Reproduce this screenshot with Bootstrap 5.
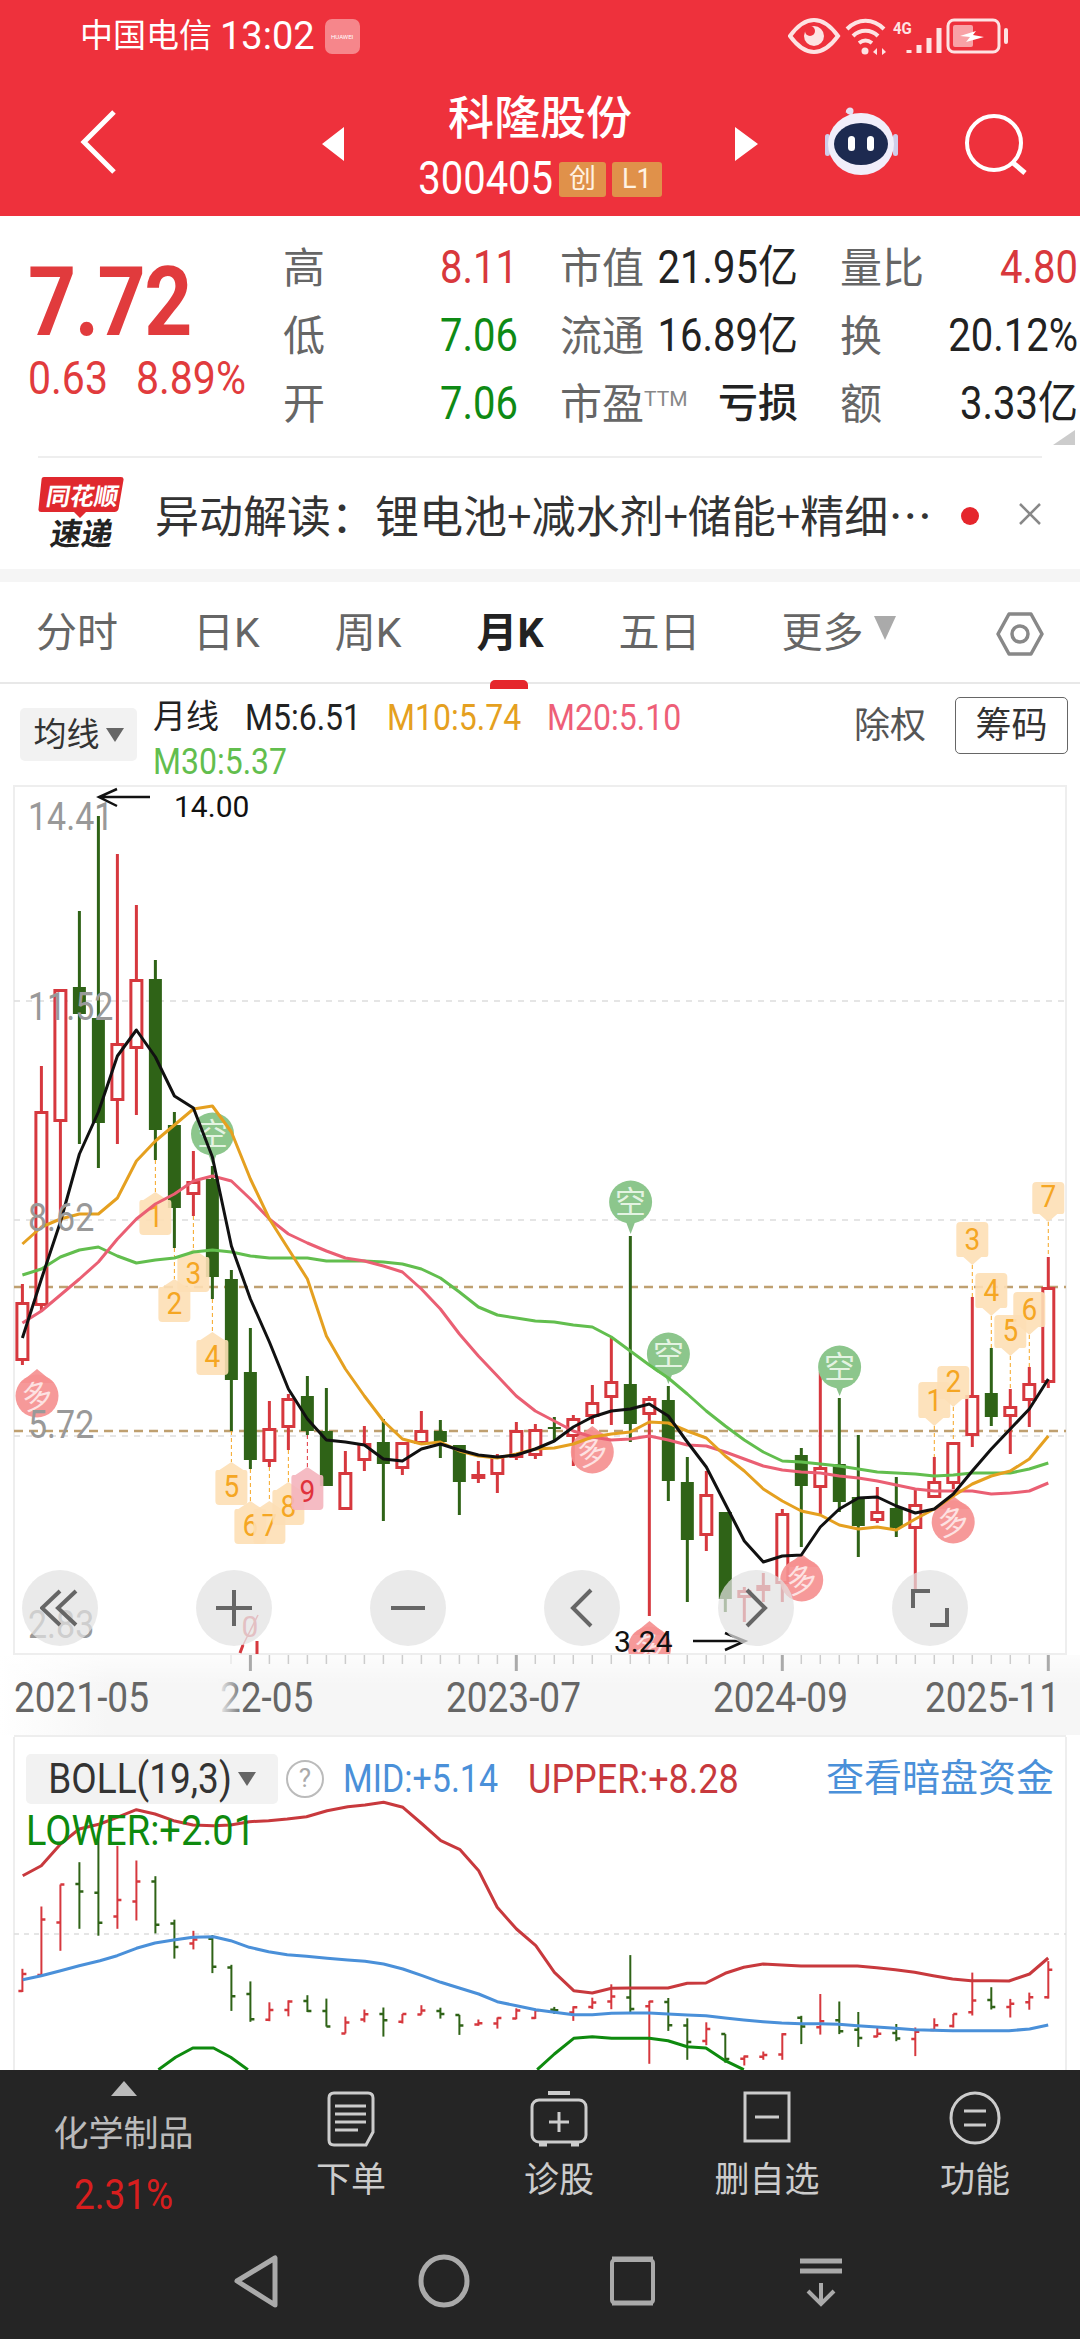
<!DOCTYPE html>
<html lang="zh">
<head>
    <meta charset="UTF-8">
    <meta name="viewport" content="width=device-width, initial-scale=1.0">
    <title>科隆股份 300405</title>
    <link href="https://cdn.jsdelivr.net/npm/bootstrap@5.3.0/dist/css/bootstrap.min.css" rel="stylesheet">
    <style>
        body { width: 1080px; height: 2340px; overflow: hidden; background: #fff; font-family: Roboto, "Noto Sans CJK SC", sans-serif; color: #222; }
        svg { display: block; }
        /* the app's digit face is taller and narrower than Roboto */
        .tall-num { display: inline-block; transform: scaleY(1.14); }
        .tall-svg { transform-box: fill-box; transform-origin: center; transform: scaleY(1.14); }
        .stock-head { height: 216px; background: #ee313c; color: #fff; }
        .status-bar { height: 72px; padding: 0 0 0 80px; font-size: 33px; }
        .status-time { font-size: 38px; margin-left: 8px; }
        .hw-badge { width: 35px; height: 35px; margin-left: 10px; border-radius: 7px; background: #f6868b; color: #fff; font-size: 6px; }
        .status-icons { margin-left: auto; padding-right: 70px; }
        .title-row { height: 144px; position: relative; }
        .stock-name { font-size: 46px; line-height: 56px; font-weight: 500; margin-top: 18px; }
        .stock-code { font-size: 40px; line-height: 46px; margin-top: 10px; }
        .code-tag { height: 35px; background: #e0914a; color: #fff2e2; font-size: 27px; line-height: 35px; border-radius: 3px; padding: 0 10px; margin-left: 6px; }
        .code-tag:first-of-type { margin-left: 14px; }
        .head-btn { position: absolute; left: 0; top: 0; }
        .quote-box { height: 240px; padding: 18px 0 0 28px; position: relative; }
        .price-big { font-size: 84px; line-height: 86px; font-weight: 700; color: #e13b3d; margin-top: 26px; letter-spacing: -1.5px; }
        .price-change { font-size: 41px; line-height: 48px; color: #e13b3d; margin-top: 8px; gap: 28px; }
        .quote-grid { position: absolute; left: 283px; top: 18px; display: grid; grid-template-columns: 235px 238px 238px; column-gap: 42px; grid-auto-rows: 68px; }
        .quote-cell { font-size: 40px; }
        .q-label { font-size: 42px; color: #666; }
        .q-bold { font-weight: 500; }
        .q-red { color: #d8383c; }
        .q-green { color: #0e8a14; }
        .ttm { font-size: 21px; color: #888; vertical-align: 13px; }
        .corner-mark { position: absolute; right: 5px; bottom: 11px; width: 0; height: 0; border-left: 22px solid transparent; border-bottom: 15px solid #ccc; }
        .news-row { height: 113px; margin: 0 38px; border-top: 2px solid #eee; font-size: 44px; color: #333; position: relative; }
        .news-text { margin-left: 27px; white-space: nowrap; font-family: "Noto Sans CJK SC", sans-serif; }
        .news-dot { position: absolute; left: 923px; top: 49px; width: 18px; height: 18px; background: #e5262c; border-radius: 50%; }
        .gray-strip { height: 13px; background: #f5f5f5; }
        .tab-bar { height: 102px; padding: 4px 36px 0; border-bottom: 2px solid #e8e8e8; position: relative; gap: 75px; font-size: 41px; color: #666; }
        .tab-on { color: #222; font-weight: 700; position: relative; }
        .tab-on::after { content: ""; position: absolute; left: 14px; bottom: -24px; width: 38px; height: 9px; background: #e5262c; border-radius: 5px 5px 0 0; }
        .tab-more { width: 116px; white-space: nowrap; margin-left: 6px; }
        .tri-down { display: inline-block; width: 0; height: 0; border-left: 11px solid transparent; border-right: 11px solid transparent; border-top: 24px solid #aaa; margin-left: 10px; vertical-align: 7px; }
        .ma-bar { height: 101px; position: relative; font-size: 32px; }
        .ma-pill { position: absolute; left: 20px; top: 24px; width: 117px; height: 53px; background: #f2f2f2; border-radius: 5px; font-size: 33px; color: #333; }
        .tri-small { width: 0; height: 0; border-left: 9px solid transparent; border-right: 9px solid transparent; border-top: 14px solid #666; margin-left: 6px; }
        .ma-vals { position: absolute; left: 153px; top: 11px; width: 560px; line-height: 44px; }
        .ma-vals span { margin-right: 26px; }
        .ma-title { font-size: 33px; }
        .c-m10 { color: #e5a020; }
        .c-m20 { color: #ee5f78; }
        .c-m30 { color: #62be4e; }
        .ma-right { position: absolute; right: 12px; top: 13px; }
        .ma-fq { font-size: 36px; color: #555; margin-right: 29px; }
        .chip-btn { width: 113px; height: 57px; border: 1px solid #666; border-radius: 5px; font-size: 36px; color: #333; }
        .chart-wrap { position: relative; height: 952px; }
        .ctrl-row { position: absolute; left: 22px; top: 785px; gap: 98px; }
        .ctrl-btn { width: 76px; height: 76px; background: rgba(226,226,226,.72); }
        .boll-wrap { position: relative; height: 333px; overflow: hidden; }
        .boll-head { position: absolute; left: 26px; top: 13px; right: 26px; font-size: 36px; }
        .boll-pill { width: 252px; height: 50px; background: #f2f2f2; border-radius: 5px; color: #333; font-size: 37px; }
        .boll-help { width: 38px; height: 38px; border: 2px solid #bbb; border-radius: 50%; color: #aaa; font-size: 26px; margin: 0 19px 0 8px; }
        .c-mid { color: #4a90d9; font-size: 34px; }
        .c-upper { color: #c8393d; margin-left: 30px; }
        .boll-link { color: #4a90d9; font-size: 38px; margin-left: auto; }
        .c-lower { position: absolute; left: 0; top: 60px; color: #0e8a0e; line-height: 40px; font-size: 38px; }
        .foot-bar { height: 269px; background: #252525; color: #ccc; }
        .foot-menu { height: 164px; }
        .foot-sector { width: 247px; padding-top: 11px; font-size: 35px; color: #bbb; line-height: 42px; }
        .sector-up { width: 0; height: 0; border-left: 13px solid transparent; border-right: 13px solid transparent; border-bottom: 15px solid #bbb; margin-bottom: 18px; }
        .sector-pct { color: #d81e1e; font-size: 37px; margin-top: 18px; }
        .foot-item { width: 208px; font-size: 35px; line-height: 42px; padding-top: 21px; }
        .foot-icon { height: 67px; margin-bottom: 2px; }
        .nav-keys { height: 105px; position: relative; }
        .nav-keys svg { position: absolute; left: 0; top: 0; }
        .chart-txt { font-family: Roboto, sans-serif; }
        .cjk-txt { font-family: "Noto Sans CJK SC", sans-serif; }
    </style>
</head>
<body>
    <div class="stock-head">
        <div class="status-bar d-flex align-items-center">
            <span>中国电信</span><span class="status-time">13:02</span>
            <span class="hw-badge d-flex align-items-center justify-content-center">HUAWEI</span>
            <span class="status-icons">
                <svg width="222" height="40" viewBox="0 0 222 40" fill="none" stroke="#fde3e3">
                    <path d="M2 20C10 9 19 4 26 4s16 5 24 16c-8 11-17 16-24 16S10 31 2 20z" stroke-width="4"/>
                    <circle cx="26" cy="20" r="10" fill="#fde3e3" stroke="none"/>
                    <circle cx="22" cy="15" r="5" fill="#ee313c" stroke="none"/>
                    <path d="M59 13c11-11 26-11 37 0M65 20c7-7 18-7 25 0M71 27c4-3 9-3 13 0" stroke-width="4"/>
                    <circle cx="77" cy="35" r="3.5" fill="#fde3e3" stroke="none"/>
                    <path d="M89 32l-4 4 4 3zM94 32l4 4-4 3z" fill="#fde3e3" stroke="none"/>
                    <text x="105" y="17" class="chart-txt tall-svg" font-size="15" font-weight="700" fill="#fde3e3" stroke="none">4G</text>
                    <path d="M121 34v3M131 29v8M141 22v15M151 12v25" stroke-width="5"/>
                    <rect x="160" y="4" width="51" height="32" rx="6" stroke-width="3"/>
                    <rect x="165" y="9" width="20" height="22" rx="2" fill="#f8a2a6" stroke="none"/>
                    <path d="M172 20l16-5-3 4 11 2-18 5 4-5z" fill="#fff" stroke="none"/>
                    <rect x="216" y="12" width="4" height="16" rx="2" fill="#fde3e3" stroke="none"/>
                </svg>
            </span>
        </div>
        <div class="title-row d-flex flex-column align-items-center">
            <div class="stock-name">科隆股份</div>
            <div class="stock-code d-flex align-items-center"><span class="tall-num">300405</span><span class="code-tag">创</span><span class="code-tag">L1</span></div>
            <svg class="head-btn" width="1080" height="144" viewBox="0 72 1080 144">
                <path d="M114 112L84 142l30 30" fill="none" stroke="#fff" stroke-width="5"/>
                <path d="M344 127v34l-22-17zM735 127v34l23-17z" fill="#fff"/>
                <path d="M852 120c0-6-1-8-6-9" fill="none" stroke="#e6e0f2" stroke-width="3"/>
                <circle cx="850" cy="111" r="3.5" fill="#e6e0f2"/>
                <rect x="825" y="134" width="5" height="22" rx="2.5" fill="#cfcdea"/>
                <rect x="893" y="134" width="5" height="22" rx="2.5" fill="#cfcdea"/>
                <ellipse cx="861" cy="144" rx="33" ry="31" fill="#f1eefa"/>
                <ellipse cx="861" cy="144" rx="27" ry="21" fill="#1d2a50"/>
                <rect x="848" y="136" width="7" height="15" rx="3.5" fill="#fff"/>
                <rect x="867" y="136" width="7" height="15" rx="3.5" fill="#fff"/>
                <circle cx="994" cy="143" r="27" fill="none" stroke="#fff" stroke-width="4"/>
                <path d="M1012 162l13 11" stroke="#fff" stroke-width="5"/>
            </svg>
        </div>
    </div>

    <div class="quote-box">
        <div class="price-big"><span class="tall-num">7.72</span></div>
        <div class="price-change d-flex"><span class="tall-num">0.63</span><span class="tall-num">8.89%</span></div>
        <div class="quote-grid">
            <div class="quote-cell d-flex justify-content-between align-items-center"><span class="q-label">高</span><span class="q-red tall-num">8.11</span></div>
            <div class="quote-cell d-flex justify-content-between align-items-center"><span class="q-label">市值</span><span class="tall-num">21.95亿</span></div>
            <div class="quote-cell d-flex justify-content-between align-items-center"><span class="q-label">量比</span><span class="q-red tall-num">4.80</span></div>
            <div class="quote-cell d-flex justify-content-between align-items-center"><span class="q-label">低</span><span class="q-green tall-num">7.06</span></div>
            <div class="quote-cell d-flex justify-content-between align-items-center"><span class="q-label">流通</span><span class="tall-num">16.89亿</span></div>
            <div class="quote-cell d-flex justify-content-between align-items-center"><span class="q-label">换</span><span class="tall-num">20.12%</span></div>
            <div class="quote-cell d-flex justify-content-between align-items-center"><span class="q-label">开</span><span class="q-green tall-num">7.06</span></div>
            <div class="quote-cell d-flex justify-content-between align-items-center"><span class="q-label">市盈<span class="ttm">TTM</span></span><span class="q-bold">亏损</span></div>
            <div class="quote-cell d-flex justify-content-between align-items-center"><span class="q-label">额</span><span class="tall-num">3.33亿</span></div>
        </div>
        <div class="corner-mark"></div>
    </div>
    <div class="news-row d-flex align-items-center">
        <svg width="90" height="80" viewBox="42 474 90 80">
            <path d="M48 477h77q3 0 2.500 3l-5 29q-1 3-4 3H90l-6 6-6-6H45q-3 0-2.500-3l3-29q0-3 2.500-3z" fill="#e0282e"/>
            <g transform="translate(85 505) skewX(-10)"><text text-anchor="middle" class="cjk-txt" font-size="24" font-weight="700" fill="#fff">同花顺</text></g>
            <g transform="translate(84 545) skewX(-10)"><text text-anchor="middle" class="cjk-txt" font-size="31" font-weight="700" fill="#222">速递</text></g>
        </svg>
        <div class="news-text">异动解读：锂电池+减水剂+储能+精细…</div>
        <div class="news-dot"></div>
        <svg class="ms-auto" width="24" height="24" viewBox="0 0 24 24" stroke="#888" stroke-width="2.500"><path d="M2 2l20 20M22 2L2 22"/></svg>
    </div>
    <div class="gray-strip"></div>

    <div class="tab-bar d-flex align-items-center">
        <span>分时</span><span>日K</span><span>周K</span><span class="tab-on">月K</span><span>五日</span>
        <span class="tab-more">更多<i class="tri-down"></i></span>
        <svg class="ms-auto" width="48" height="46" viewBox="0 0 48 46" fill="none" stroke="#888" stroke-width="3.500"><path d="M13 3h22l11 20-11 20H13L2 23z" stroke-linejoin="round"/><circle cx="24" cy="23" r="8"/></svg>
    </div>

    <div class="ma-bar">
        <div class="ma-pill d-flex align-items-center justify-content-center">均线<i class="tri-small"></i></div>
        <div class="ma-vals d-flex flex-wrap align-items-center">
            <span class="ma-title">月线</span><span class="tall-num">M5:6.51</span><span class="c-m10 tall-num">M10:5.74</span><span class="c-m20 tall-num">M20:5.10</span><span class="c-m30 tall-num">M30:5.37</span>
        </div>
        <div class="ma-right d-flex align-items-center">
            <span class="ma-fq">除权</span>
            <span class="chip-btn d-flex align-items-center justify-content-center">筹码</span>
        </div>
    </div>

    <div class="chart-wrap">
        <div id="kChart"></div>
        <div class="ctrl-row d-flex">
            <div class="ctrl-btn rounded-circle d-flex align-items-center justify-content-center"><svg width="40" height="40" viewBox="0 0 40 40" fill="none" stroke="#666" stroke-width="4"><path d="M20 3L2 20l18 17M36 3L18 20l18 17"/></svg></div>
            <div class="ctrl-btn rounded-circle d-flex align-items-center justify-content-center"><svg width="38" height="38" viewBox="0 0 38 38" fill="none" stroke="#666" stroke-width="4"><path d="M1 19h36M19 1v36"/></svg></div>
            <div class="ctrl-btn rounded-circle d-flex align-items-center justify-content-center"><svg width="38" height="38" viewBox="0 0 38 38" fill="none" stroke="#666" stroke-width="4"><path d="M2 19h34"/></svg></div>
            <div class="ctrl-btn rounded-circle d-flex align-items-center justify-content-center"><svg width="24" height="40" viewBox="0 0 24 40" fill="none" stroke="#666" stroke-width="4"><path d="M21 2L3 20l18 18"/></svg></div>
            <div class="ctrl-btn rounded-circle d-flex align-items-center justify-content-center"><svg width="24" height="40" viewBox="0 0 24 40" fill="none" stroke="#666" stroke-width="4"><path d="M3 2l18 18L3 38"/></svg></div>
            <div class="ctrl-btn rounded-circle d-flex align-items-center justify-content-center"><svg width="40" height="40" viewBox="0 0 40 40" fill="none" stroke="#666" stroke-width="4"><path d="M20 3H3v17M20 37h17V20"/></svg></div>
        </div>
    </div>

    <div class="boll-wrap">
        <div id="bollChart"></div>
        <div class="boll-head d-flex align-items-center">
            <span class="boll-pill d-flex align-items-center justify-content-center"><span class="tall-num">BOLL(19,3)</span><i class="tri-small"></i></span>
            <span class="boll-help d-flex align-items-center justify-content-center">?</span>
            <span class="c-mid tall-num">MID:+5.14</span>
            <span class="c-upper tall-num">UPPER:+8.28</span>
            <span class="boll-link">查看暗盘资金</span>
            <span class="c-lower tall-num">LOWER:+2.01</span>
        </div>
    </div>

    <div class="foot-bar">
        <div class="foot-menu d-flex">
            <div class="foot-sector d-flex flex-column align-items-center">
                <div class="sector-up"></div>
                <div>化学制品</div>
                <div class="sector-pct tall-num">2.31%</div>
            </div>
            <div class="foot-item d-flex flex-column align-items-center">
                <div class="foot-icon"><svg width="48" height="56" viewBox="0 0 48 56" fill="none" stroke="#ccc" stroke-width="3"><path d="M7 2h34q5 0 5 5v34l-7 13H7q-5 0-5-5V7q0-5 5-5z"/><path d="M8 15h31M8 23h31M8 31h31M8 39h23"/></svg></div>
                <div>下单</div>
            </div>
            <div class="foot-item d-flex flex-column align-items-center">
                <div class="foot-icon"><svg width="58" height="56" viewBox="0 0 58 56" fill="none" stroke="#ccc" stroke-width="3"><path d="M18 2h22" stroke-width="4"/><rect x="2" y="9" width="54" height="42" rx="7"/><path d="M29 21v20M19 31h20"/><path d="M9 53h8M41 53h8" stroke-width="5"/></svg></div>
                <div>诊股</div>
            </div>
            <div class="foot-item d-flex flex-column align-items-center">
                <div class="foot-icon"><svg width="48" height="52" viewBox="0 0 48 52" fill="none" stroke="#ccc" stroke-width="3"><rect x="2" y="2" width="44" height="48"/><path d="M12 26h24"/></svg></div>
                <div>删自选</div>
            </div>
            <div class="foot-item d-flex flex-column align-items-center">
                <div class="foot-icon"><svg width="52" height="54" viewBox="0 0 52 54" fill="none" stroke="#ccc" stroke-width="3"><ellipse cx="26" cy="27" rx="24" ry="25"/><path d="M15 20h22M15 34h22"/></svg></div>
                <div>功能</div>
            </div>
        </div>
        <div class="nav-keys">
            <svg width="1080" height="105" viewBox="0 2235 1080 105" fill="none" stroke="#aaa">
                <path d="M275 2259v47l-38-24z" stroke-width="5" stroke-linejoin="round"/>
                <ellipse cx="444" cy="2282" rx="23" ry="24" stroke-width="5"/>
                <rect x="612" y="2261" width="41" height="43" rx="3" stroke-width="4"/>
                <path d="M612 2260h41M612 2304h41" stroke-width="5"/>
                <path d="M800 2262h42M800 2272h42" stroke-width="5"/>
                <path d="M821 2284v20M808 2292l13 13 13-13" stroke-width="4"/>
            </svg>
        </div>
    </div>

    <script>
        // [hi, bodyTop, bodyBottom, lo, up] in page pixels, one per month
        const candles = [
            [1285,1303,1362,1366,1],[1067,1112,1307,1312,1],[990,990,1123,1222,1],[912,988,1015,1145,0],[817,1019,1124,1169,0],
            [855,1044,1102,1145,1],[906,980,1050,1116,1],[961,980,1131,1161,0],[1113,1126,1209,1249,0],[1152,1182,1196,1217,1],
            [1167,1180,1278,1300,0],[1271,1280,1381,1432,0],[1329,1373,1461,1470,0],[1402,1429,1463,1468,1],[1395,1399,1429,1451,1],
            [1377,1397,1432,1436,0],[1389,1432,1487,1487,0],[1452,1473,1511,1511,1],[1427,1444,1462,1472,1],[1420,1443,1465,1522,0],
            [1443,1443,1470,1476,1],[1412,1431,1445,1445,1],[1421,1432,1443,1459,0],[1446,1446,1483,1516,0],[1462,1475,1480,1484,1],
            [1455,1457,1476,1494,1],[1423,1431,1459,1461,1],[1425,1430,1457,1460,1],[1418,1428,1430,1443,0],[1416,1419,1438,1467,1],
            [1386,1403,1418,1425,1],[1339,1382,1399,1426,1],[1237,1385,1425,1443,0],[1397,1399,1416,1617,1],[1387,1401,1482,1502,0],
            [1458,1483,1541,1603,0],[1472,1495,1537,1552,1],[1513,1513,1600,1613,0],[1588,1591,1599,1623,1],[1574,1586,1592,1603,1],
            [1510,1514,1585,1603,1],[1449,1456,1487,1548,0],[1373,1468,1489,1515,1],[1399,1465,1503,1513,0],[1436,1498,1527,1558,0],
            [1488,1512,1522,1524,1],[1478,1509,1529,1538,0],[1490,1505,1530,1590,1],[1458,1482,1499,1499,1],[1443,1443,1485,1490,1],
            [1298,1396,1437,1448,1],[1349,1394,1418,1427,0],[1390,1407,1418,1455,1],[1368,1384,1402,1428,1],[1258,1288,1384,1389,1]
        ];
        const m5 = [1339,1280,1223,1155,1113,1057,1031,1058,1097,1109,1158,1247,1300,1343,1390,1420,1441,1443,1446,1460,1462,1450,1445,1451,1456,1458,1456,1450,1442,1428,1418,1412,1410,1405,1417,1443,1468,1505,1542,1563,1557,1556,1528,1510,1499,1498,1507,1514,1510,1495,1472,1450,1430,1410,1380];
        const m10 = [1245,1228,1220,1215,1215,1199,1162,1142,1126,1110,1107,1133,1180,1220,1250,1280,1337,1370,1397,1422,1440,1445,1443,1452,1457,1459,1455,1450,1449,1445,1438,1435,1433,1423,1424,1432,1439,1457,1472,1490,1502,1512,1516,1526,1530,1528,1531,1520,1510,1497,1485,1477,1472,1460,1437];
        const m20 = [1324,1312,1296,1280,1263,1240,1220,1205,1195,1182,1177,1182,1200,1220,1235,1244,1252,1259,1262,1267,1273,1290,1310,1335,1357,1377,1397,1412,1422,1432,1438,1441,1440,1437,1441,1446,1447,1453,1460,1467,1471,1473,1474,1477,1479,1482,1486,1490,1492,1492,1492,1495,1494,1492,1484];
        const m30 = [1276,1270,1258,1251,1248,1257,1264,1261,1259,1253,1251,1253,1257,1259,1259,1259,1262,1262,1262,1263,1265,1270,1279,1293,1308,1316,1319,1322,1323,1326,1328,1338,1352,1366,1379,1395,1412,1427,1441,1453,1462,1463,1465,1467,1470,1473,1474,1475,1477,1476,1474,1474,1474,1470,1464];
        const xAt = i => 22.4 + i * 18.998;
        const RED = '#d6383e', GREEN = '#2f6317';

        function polyline(ys, color) {
            const pts = ys.map((y, i) => xAt(i).toFixed(1) + ',' + y).join(' ');
            return `<polyline points="${pts}" fill="none" stroke="${color}" stroke-width="3" stroke-linejoin="round"/>`;
        }

        function drawCandles() {
            return candles.map((c, i) => {
                const x = xAt(i), color = c[4] ? RED : GREEN;
                let s = `<path d="M${x} ${c[0]}V${c[1]}M${x} ${c[2]}V${c[3]}" stroke="${color}" stroke-width="3"/>`;
                if (c[4]) s += `<rect x="${x - 5.5}" y="${c[1] + 1.5}" width="11" height="${c[2] - c[1] - 3}" fill="#fff" stroke="${color}" stroke-width="3"/>`;
                else s += `<rect x="${x - 6.5}" y="${c[1]}" width="13" height="${c[2] - c[1]}" fill="${color}"/>`;
                return s;
            }).join('');
        }

        function tagBelow(i, tip, n, from, pink) {
            // number label hanging under a candle, tip up
            const x = xAt(i), t = tip, b = tip + 43;
            const fill = pink ? '#f4b4bc' : '#fddfb5', txt = pink ? '#e0323c' : '#f5a623';
            return `<path d="M${x} ${from}V${t}" stroke="${txt}" stroke-width="1" stroke-dasharray="4 3"/>` +
                `<path d="M${x} ${t}l12 8h2q2 0 2 3v${b - t - 15}q0 4-4 4h-24q-4 0-4-4v-${b - t - 15}q0-3 2-3h2z" fill="${fill}" fill-opacity=".9"/>` +
                `<text x="${x}" y="${b - 9}" text-anchor="middle" class="chart-txt tall-svg" font-size="28" fill="${txt}">${n}</text>`;
        }

        function tagAbove(i, top, tip, n, to) {
            // number label above a candle, tip down
            const x = xAt(i), b = tip - 8;
            return `<path d="M${x} ${tip}V${to}" stroke="#f5a623" stroke-width="1" stroke-dasharray="4 3"/>` +
                `<path d="M${x} ${tip}l-9 -8h-5q-2 0-2-3v-${b - top - 7}q0-4 4-4h24q4 0 4 4v${b - top - 7}q0 3-2 3h-5z" fill="#fddfb5" fill-opacity=".9"/>` +
                `<text x="${x}" y="${b - 8}" text-anchor="middle" class="chart-txt tall-svg" font-size="28" fill="#f5a623">${n}</text>`;
        }

        function shortMark(x, y, tip) {
            return `<path d="M${x} ${tip}l-17 ${y - tip - 13}h34z" fill="#6fb46f" fill-opacity=".8"/><circle cx="${x}" cy="${y}" r="21.500" fill="#8cc68c"/>` +
                `<text x="${x}" y="${y + 11}" text-anchor="middle" class="cjk-txt" font-size="31" fill="#e4f3e2">空</text>`;
        }

        function longMark(x, y, tip) {
            return `<path d="M${x} ${tip}l-17 ${y - tip - 13 > 0 ? y - tip - 13 : 13}h34z" fill="#f59090" fill-opacity=".92"/><circle cx="${x}" cy="${y}" r="21.500" fill="#f59090" fill-opacity=".92"/>` +
                `<text x="${x}" y="${y + 11}" text-anchor="middle" class="cjk-txt" font-size="31" fill="#fde2e2" transform="rotate(-15 ${x} ${y})">多</text>`;
        }

        function drawKChart() {
            let s = `<svg width="1080" height="952" viewBox="0 786 1080 952">`;
            s += `<defs><linearGradient id="axisFade" x1="0" x2="1"><stop offset="0" stop-color="#fff"/><stop offset=".1" stop-color="#f6f6f6"/><stop offset="1" stop-color="#f6f6f6"/></linearGradient>
                <linearGradient id="axisV" x1="0" x2="0" y1="0" y2="1"><stop offset="0" stop-color="#fff" stop-opacity=".7"/><stop offset="1" stop-color="#fff" stop-opacity="0"/></linearGradient>
                <linearGradient id="textFade" x1="0" x2="1"><stop offset="0" stop-color="#f6f6f6"/><stop offset="1" stop-color="#f6f6f6" stop-opacity="0"/></linearGradient></defs>`;
            s += `<rect x="14" y="787" width="1052" height="868" fill="#fff" stroke="#eee" stroke-width="2"/>`;
            s += `<path d="M14 1002H1066M14 1221H1066M14 1437H1066" stroke="#ddd" stroke-width="1.500" stroke-dasharray="6 6"/>`;
            s += `<path d="M14 1288H1066M14 1432H1066" stroke="#bfa070" stroke-width="2.500" stroke-dasharray="9 6"/>`;
            s += drawCandles();

            s += tagBelow(7, 1193, 1, 1161);
            s += tagBelow(8, 1280, 2, 1249);
            s += tagBelow(9, 1250, 3, 1217);
            s += tagBelow(10, 1333, 4, 1300);
            s += tagBelow(11, 1463, 5, 1432);
            s += tagBelow(12, 1502, 6, 1470);
            s += tagBelow(13, 1502, 7, 1468);
            s += tagBelow(14, 1483, 8, 1451);
            s += tagBelow(15, 1468, 9, 1436, true);
            s += tagAbove(48, 1383, 1427, 1, 1458);
            s += tagAbove(49, 1367, 1408, 2, 1443);
            s += tagAbove(50, 1223, 1266, 3, 1298);
            s += tagAbove(51, 1274, 1317, 4, 1349);
            s += tagAbove(52, 1316, 1357, 5, 1390);
            s += tagAbove(53, 1293, 1336, 6, 1368);
            s += tagAbove(54, 1183, 1223, 7, 1258);

            s += shortMark(212.5, 1135, 1166) + shortMark(630.6, 1203, 1235) + shortMark(668.4, 1355, 1385) + shortMark(839.6, 1368, 1397);
            s += longMark(37, 1397, 1370) + longMark(592.3, 1453, 1427) + longMark(801.7, 1581, 1555) + longMark(953.2, 1523, 1497);
            s += `<clipPath id="chartClip"><rect x="14" y="787" width="1052" height="868"/></clipPath>`;
            s += `<g clip-path="url(#chartClip)">` + longMark(649.5, 1649, 1622) + `</g>`;
            s += `<text x="250" y="1638" text-anchor="middle" class="chart-txt" font-size="30" fill="#e56a72">0</text><path d="M242 1648l16-32" stroke="#e56a72" stroke-width="1.500"/><path d="M243 1646l-3 8M257 1642v13" stroke="#d6383e" stroke-width="3"/>`;

            s += polyline(m30, '#62be4e') + polyline(m20, '#ea5f73') + polyline(m10, '#e5a020') + polyline(m5, '#111');

            // price labels lie over the candles
            const labels = [['14.41', 829], ['11.52', 1019], ['8.62', 1230], ['5.72', 1437], ['2.83', 1637]];
            s += labels.map(l => `<text x="28" y="${l[1]}" class="chart-txt tall-svg" font-size="34" fill="#999">${l[0]}</text>`).join('');

            s += `<text x="174" y="818" class="chart-txt" font-size="30" fill="#111">14.00</text>`;
            s += `<path d="M150 798H99M117 790l-18 8 18 9" fill="none" stroke="#111" stroke-width="2.500"/>`;
            s += `<text x="614" y="1653" class="chart-txt" font-size="30" fill="#111">3.24</text>`;
            s += `<path d="M693 1642H745M725 1634l20 8-20 9" fill="none" stroke="#111" stroke-width="2.500"/>`;

            // time axis
            s += `<rect x="0" y="1656" width="1080" height="80" fill="url(#axisFade)"/><rect x="0" y="1656" width="1080" height="30" fill="url(#axisV)"/>`;
            let ticks = '';
            for (let i = 12; i <= 54; i++) {
                const major = (i - 12) % 14 === 0;
                ticks += `<path d="M${xAt(i).toFixed(1)} 1656v${major ? 16 : 9}" stroke="${major ? '#aaa' : '#ccc'}" stroke-width="${major ? 3 : 1.5}"/>`;
            }
            s += ticks + `<path d="M231 1656v9" stroke="#e8e8e8" stroke-width="1.5"/>`;
            const axisText = [['2021-05', 14], ['22-05', 220], ['2023-07', 446], ['2024-09', 713], ['2025-11', 925]];
            s += axisText.map(l => `<text x="${l[1]}" y="1711" class="chart-txt tall-svg" font-size="37" fill="#666">${l[0]}</text>`).join('');
            s += `<rect x="218" y="1680" width="26" height="40" fill="url(#textFade)"/>`;
            s += `<rect x="14" y="1736" width="1052" height="2" fill="#eee"/>`;
            s += `</svg>`;
            document.getElementById('kChart').innerHTML = s;
        }

        function crop6(points) {
            // points read off the reference crop: x scaled 1.452, y scaled 3 from y=1720
            return points.map(p => (p[0] / 1.452).toFixed(1) + ',' + (1720 + p[1] / 3).toFixed(1)).join(' ');
        }

        function drawBoll() {
            const upper = [[33,470],[60,440],[88,375],[115,330],[145,315],[170,295],[198,272],[225,285],[252,305],[280,318],[310,320],[335,318],[362,308],[390,305],[417,300],[445,293],[475,275],[505,263],[530,258],[557,250],[585,265],[613,315],[640,365],[668,392],[695,455],[722,565],[750,630],[778,680],[805,760],[833,815],[860,822],[888,808],[915,807],[943,807],[970,807],[998,793],[1025,792],[1053,763],[1080,745],[1108,735],[1135,738],[1163,741],[1190,741],[1218,741],[1245,741],[1273,746],[1300,752],[1328,760],[1355,770],[1383,780],[1410,785],[1438,785],[1465,786],[1495,765],[1522,717]];
            const mid = [[33,782],[60,770],[88,755],[115,740],[145,725],[170,710],[198,688],[225,672],[252,663],[280,655],[310,653],[335,665],[362,685],[390,698],[417,707],[445,712],[475,718],[505,723],[530,727],[557,735],[585,750],[613,770],[640,790],[668,808],[695,825],[722,848],[750,860],[778,872],[805,880],[833,887],[860,887],[888,883],[915,882],[943,882],[970,885],[998,888],[1025,890],[1053,897],[1080,903],[1108,908],[1135,912],[1163,914],[1190,914],[1218,916],[1245,920],[1273,924],[1300,928],[1328,932],[1355,934],[1383,935],[1410,935],[1438,935],[1465,935],[1495,930],[1522,918]];
            const low1 = [[230,1052],[255,1015],[280,987],[310,987],[335,1015],[360,1052]];
            const low2 = [[780,1052],[805,1005],[833,958],[860,953],[888,958],[915,958],[943,958],[970,965],[998,983],[1025,987],[1053,1025],[1080,1052]];
            const by = y => (1836 + (y - 817) * 0.286).toFixed(1);
            let s = `<svg width="1080" height="333" viewBox="0 1738 1080 333">`;
            s += `<path d="M14 1738V2071M1066 1738V2071" stroke="#eee" stroke-width="2"/>`;
            s += `<path d="M14 1935H1066" stroke="#ddd" stroke-width="1.500" stroke-dasharray="5 5"/>`;
            s += candles.map((c, i) => {
                const x = xAt(i).toFixed(1), color = c[4] ? RED : GREEN;
                const open = c[4] ? c[2] : c[1], close = c[4] ? c[1] : c[2];
                return `<path d="M${x} ${by(c[0])}V${by(c[3])}" stroke="${color}" stroke-width="2"/>` +
                    `<path d="M${x} ${by(open)}h-4M${x} ${by(close)}h4" stroke="${color}" stroke-width="2.500"/>`;
            }).join('');
            const line = (pts, color) => `<polyline points="${crop6(pts)}" fill="none" stroke="${color}" stroke-width="3" stroke-linejoin="round"/>`;
            s += line(upper, '#c8393d') + line(mid, '#4a90d9') + line(low1, '#0e8a0e') + line(low2, '#0e8a0e');
            s += `</svg>`;
            document.getElementById('bollChart').innerHTML = s;
        }

        drawKChart();
        drawBoll();
    </script>
    <script src="https://cdn.jsdelivr.net/npm/bootstrap@5.3.0/dist/js/bootstrap.bundle.min.js"></script>
</body>
</html>
